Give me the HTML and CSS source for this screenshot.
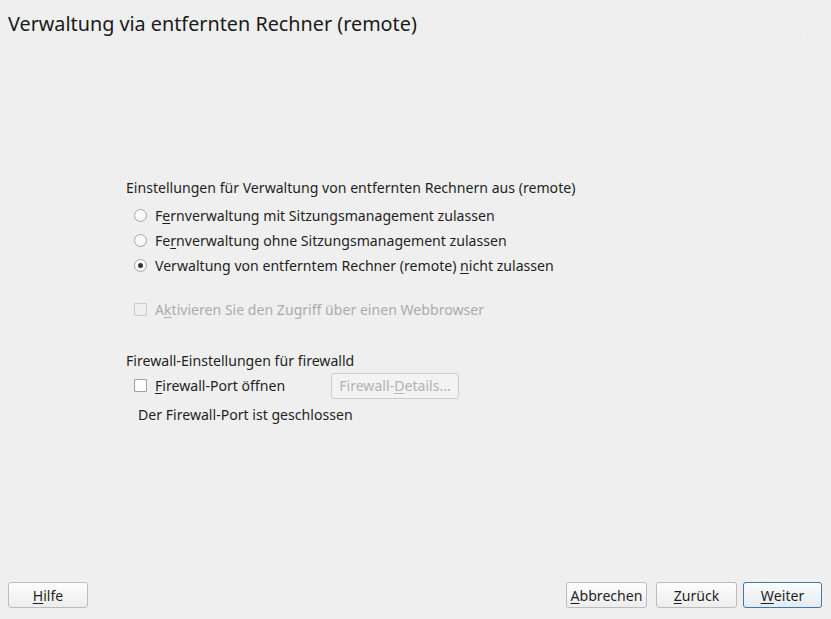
FILE: index.html
```html
<!DOCTYPE html>
<html>
<head>
<meta charset="utf-8">
<link rel="stylesheet" href="styles.css">
</head>
<body>
<div class="window">
  <h1 class="title">Verwaltung via entfernten Rechner (remote)</h1>
  <div class="main">
    <div class="panel">
      <div class="group-label">Einstellungen für Verwaltung von entfernten Rechnern aus (remote)</div>
      <div class="row radio-row first"><span class="radio"></span><span>F<u>e</u>rnverwaltung mit Sitzungsmanagement zulassen</span></div>
      <div class="row radio-row"><span class="radio"></span><span>Fe<u>r</u>nverwaltung ohne Sitzungsmanagement zulassen</span></div>
      <div class="row radio-row"><span class="radio checked"></span><span>Verwaltung von entferntem Rechner (remote) <u>n</u>icht zulassen</span></div>
      <div class="row check-row disabled"><span class="check"></span><span>A<u>k</u>tivieren Sie den Zugriff über einen Webbrowser</span></div>
      <div class="group-label fw-label">Firewall-Einstellungen für firewalld</div>
      <div class="row fw-row">
        <span class="check"></span><span class="fw-text"><u>F</u>irewall-Port öffnen</span>
        <span class="btn btn-disabled">Firewall-<u>D</u>etails...</span>
      </div>
      <div class="status">Der Firewall-Port ist geschlossen</div>
    </div>
  </div>
  <div class="footer">
    <span class="btn btn-foot"><u>H</u>ilfe</span>
    <div class="spacer"></div>
    <span class="btn btn-foot btn-abort"><u>A</u>bbrechen</span>
    <span class="btn btn-foot btn-back"><u>Z</u>urück</span>
    <span class="btn btn-foot btn-default"><u>W</u>eiter</span>
  </div>
</div>
</body>
</html>
```
FILE: styles.css
```css
html, body {
  margin: 0;
  padding: 0;
}
body {
  background: #efefef;
  font-family: "Noto Sans", "DejaVu Sans", sans-serif;
  font-size: 14.1px;
  color: #1f1f1f;
}
.window {
  width: 831px;
  height: 619px;
  display: flex;
  flex-direction: column;
  box-sizing: border-box;
}
.title {
  margin: 0;
  padding: 12px 0 0 8px;
  font-size: 19.8px;
  font-weight: normal;
  line-height: 24px;
  color: #1a1a1a;
}
.main {
  flex: 1;
  margin-right: 30px;
  border-right: 1px solid #ebebeb;
  margin-bottom: 12px;
}
.panel {
  margin: 142px 0 0 126px;
}
.group-label {
  line-height: 20px;
  height: 20px;
}
.row {
  display: flex;
  align-items: center;
  height: 25px;
}
.radio-row.first {
  margin-top: 5px;
}
.radio, .check {
  width: 13px;
  height: 13px;
  box-sizing: border-box;
  margin-left: 8px;
  margin-right: 8px;
  flex: none;
}
.radio {
  border: 1px solid #a4a4a4;
  border-radius: 50%;
  background: linear-gradient(#ffffff, #f4f4f4);
  position: relative;
}
.radio.checked::after {
  content: "";
  position: absolute;
  left: 3px;
  top: 3px;
  width: 5px;
  height: 5px;
  border-radius: 50%;
  background: #333;
}
.check {
  border: 1px solid #a0a0a0;
  background: #ffffff;
  border-radius: 1px;
}
.check-row {
  margin-top: 19px;
}
.disabled {
  color: #ababab;
}
.disabled .check {
  border-color: #cacaca;
  background: #efefef;
}
.fw-label {
  margin-top: 29px;
}
.fw-row {
  margin-top: 2px;
}
.fw-text {
  width: 176px;
}
.btn {
  display: inline-flex;
  align-items: center;
  justify-content: center;
  box-sizing: border-box;
  height: 26px;
  border: 1px solid #bcbcbc;
  border-radius: 3px;
  background: linear-gradient(#fdfdfd, #ededed);
  padding: 0 2px;
  color: #1f1f1f;
}
.btn-disabled {
  width: 128px;
  color: #b2b2b2;
  border-color: #cdcdcd;
  background: #f3f3f3;
  height: 26px;
}
.status {
  margin: 7px 0 0 12px;
  line-height: 20px;
}
.footer {
  display: flex;
  align-items: center;
  padding: 0 9px 11px 8px;
}
.spacer {
  flex: 1;
}
.btn-foot {
  width: 80px;
}
.btn-abort {
  width: 81px;
}
.btn-back {
  width: 81px;
  margin-left: 9px;
}
.btn-default {
  width: 79px;
  margin-left: 6px;
  border-color: #3f77a8;
  background: linear-gradient(#fcfdfe, #e4ebf1);
}
u {
  text-decoration-thickness: 1px;
  text-underline-offset: 2px;
}
```
